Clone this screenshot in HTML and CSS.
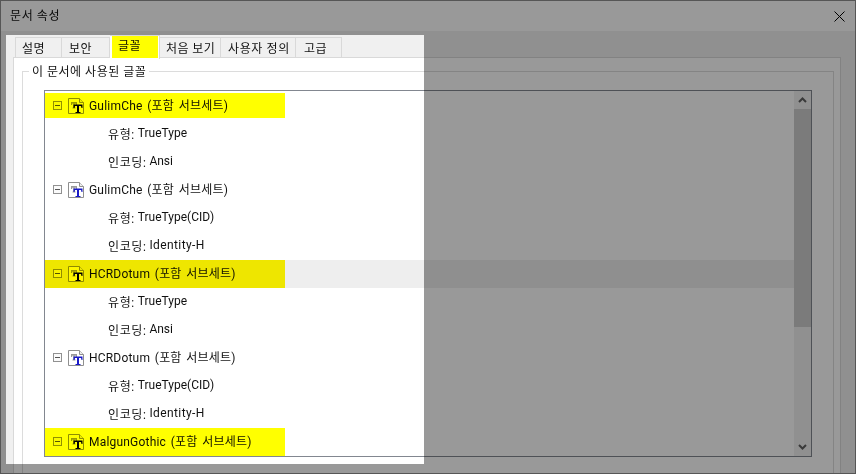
FILE: index.html
```html
<!DOCTYPE html>
<html lang="ko">
<head>
    <meta charset="UTF-8">
    <title>문서 속성</title>
    <link rel="stylesheet" href="styles.css">
</head>
<body>
    <svg class="icon-defs" width="0" height="0">
        <symbol id="font-icon" viewBox="0 0 16 16">
            <path class="paper" d="M0.5 0.5H11.5L15.5 4.5V15.5H0.5Z"/>
            <path class="fold" d="M11.5 0.5V4.5H15.5"/>
            <path class="t-back" d="M3 4H9V7H8L7.5 5.5H6.7V9.5H7.5V10.5H4.5V9.5H5.3V5.5H4.5L4 7H3Z"/>
            <path class="t-front" d="M5.5 6.5H14.5V10H13.5L13 8H11V14H12.5V15H7.5V14H9V8H7L6.5 10H5.5Z"/>
        </symbol>
    </svg>

    <div class="window">
        <div class="titlebar">
            <span class="title">문서 속성</span>
            <svg class="close" width="11" height="11" viewBox="0 0 11 11">
                <path d="M0.5 0.5L10.5 10.5M10.5 0.5L0.5 10.5"/>
            </svg>
        </div>

        <div class="dialog-body">
            <div class="tabs">
                <div class="tab tab-desc">설명</div>
                <div class="tab tab-security">보안</div>
                <div class="tab tab-fonts active">글꼴<span class="highlight"></span></div>
                <div class="tab tab-view">처음 보기</div>
                <div class="tab tab-custom">사용자 정의</div>
                <div class="tab tab-advanced">고급</div>
            </div>

            <div class="tab-page">
                <fieldset class="group">
                    <legend>이 문서에 사용된 글꼴</legend>
                    <div class="tree">
                        <div class="tree-rows">
                            <div class="row font-row truetype first">
                                <span class="toggle"></span>
                                <svg class="font-icon"><use href="#font-icon"/></svg>
                                <span class="font-name">GulimChe (포함 서브세트)</span>
                                <span class="highlight"></span>
                            </div>
                            <div class="row detail"><span class="key">유형:</span>&nbsp;TrueType</div>
                            <div class="row detail"><span class="key">인코딩:</span>&nbsp;Ansi</div>
                            <div class="row font-row cid">
                                <span class="toggle"></span>
                                <svg class="font-icon"><use href="#font-icon"/></svg>
                                <span class="font-name">GulimChe (포함 서브세트)</span>
                            </div>
                            <div class="row detail"><span class="key">유형:</span>&nbsp;TrueType(CID)</div>
                            <div class="row detail"><span class="key">인코딩:</span>&nbsp;<span class="wide">Identity-H</span></div>
                            <div class="row font-row truetype hover">
                                <span class="toggle"></span>
                                <svg class="font-icon"><use href="#font-icon"/></svg>
                                <span class="font-name">HCRDotum (포함 서브세트)</span>
                                <span class="highlight"></span>
                            </div>
                            <div class="row detail"><span class="key">유형:</span>&nbsp;TrueType</div>
                            <div class="row detail"><span class="key">인코딩:</span>&nbsp;Ansi</div>
                            <div class="row font-row cid">
                                <span class="toggle"></span>
                                <svg class="font-icon"><use href="#font-icon"/></svg>
                                <span class="font-name">HCRDotum (포함 서브세트)</span>
                            </div>
                            <div class="row detail"><span class="key">유형:</span>&nbsp;TrueType(CID)</div>
                            <div class="row detail"><span class="key">인코딩:</span>&nbsp;<span class="wide">Identity-H</span></div>
                            <div class="row font-row truetype">
                                <span class="toggle"></span>
                                <svg class="font-icon"><use href="#font-icon"/></svg>
                                <span class="font-name">MalgunGothic (포함 서브세트)</span>
                                <span class="highlight"></span>
                            </div>
                        </div>

                        <div class="scrollbar">
                            <svg class="arrow" width="9" height="6" viewBox="0 0 9 6">
                                <path d="M1 5L4.5 1.5L8 5"/>
                            </svg>
                            <div class="track">
                                <div class="thumb"></div>
                            </div>
                            <svg class="arrow" width="9" height="6" viewBox="0 0 9 6">
                                <path d="M1 1L4.5 4.5L8 1"/>
                            </svg>
                        </div>
                    </div>
                </fieldset>
            </div>
        </div>
    </div>

    <div class="spotlight"></div>
</body>
</html>
```

FILE: styles.css
```css
* {
    box-sizing: border-box;
}

html, body {
    margin: 0;
    padding: 0;
    width: 856px;
    height: 474px;
    overflow: hidden;
}

body {
    position: relative;
    font-family: Roboto, "Noto Sans CJK KR", sans-serif;
    font-size: 12px;
    color: #111;
    background-color: #f0f0f0;
}

.icon-defs {
    position: absolute;
}

.window {
    display: flex;
    flex-direction: column;
    height: 474px;
    border: 1px solid #8f8f8f;
    overflow: hidden;
}

.titlebar {
    display: flex;
    flex: none;
    justify-content: space-between;
    align-items: center;
    height: 30px;
    padding: 0 10px 0 9px;
    background-color: #fff;
}

.title {
    margin-bottom: 3px;
    letter-spacing: 0.6px;
}

.close path {
    fill: none;
    stroke: #000;
    stroke-width: 1;
}

.dialog-body {
    flex: 1;
    padding: 6px 14px 0 12px;
    background-color: #f0f0f0;
}

/* tabs */
.tabs {
    display: flex;
    height: 20px;
    padding-left: 2px;
}

.tab {
    position: relative;
    height: 21px;
    padding-left: 6px;
    line-height: 22px;
    letter-spacing: 0.4px;
    background-color: #f0f0f0;
    border: 1px solid #d9d9d9;
    border-left: 0;
    white-space: nowrap;
}

.tab:first-child {
    border-left: 1px solid #d9d9d9;
}

.tab-desc { width: 47px; }
.tab-security { width: 48px; padding-left: 7px; }
.tab-view { width: 61px; }
.tab-custom { width: 75px; padding-left: 7px; letter-spacing: 0.6px; }
.tab-advanced { width: 46px; padding-left: 8px; }

.tab.active {
    z-index: 1;
    width: 50px;
    height: 24px;
    margin-top: -2px;
    padding-left: 8px;
    line-height: 20px;
    background-color: #fff;
    border-bottom: 0;
}

.tab.active .highlight {
    top: 0;
    bottom: 1px;
    left: 2px;
    right: 1px;
    width: auto;
}

.highlight {
    position: absolute;
    background-color: #ff0;
    mix-blend-mode: multiply;
}

.tab-page {
    height: 420px;
    padding: 3px 6px 0 8px;
    background-color: #fff;
    border: 1px solid #d9d9d9;
}

.group {
    min-width: 0;
    height: 440px;
    margin: 0;
    padding: 9px 21px 0 21px;
    border: 1px solid #dcdcdc;
}

.group legend {
    margin-left: -15px;
    padding: 2px 3px 0;
    line-height: 18px;
    letter-spacing: 0.5px;
}

/* font tree */
.tree {
    display: flex;
    height: 367px;
    background-color: #fff;
    border: 1px solid #828790;
}

.tree-rows {
    flex: 1;
    padding-top: 1px;
}

.row {
    position: relative;
    display: flex;
    align-items: center;
    height: 28px;
    white-space: nowrap;
}

.detail {
    padding: 0 0 2px 63px;
}

.key {
    letter-spacing: 0.6px;
}

.wide {
    letter-spacing: 0.4px;
}

.font-row {
    padding-left: 8px;
}

.font-name {
    margin-bottom: 4px;
    letter-spacing: 0.2px;
    word-spacing: 1.5px;
}

.font-row .highlight {
    top: 0;
    bottom: 0;
    left: 0;
    width: 240px;
}

.font-row.first .highlight {
    top: 1px;
    bottom: 2px;
}

.font-row.hover {
    background-color: #eee;
}

.font-row.hover .highlight {
    background-color: #fff700;
}

.cid {
    --t-color: #1a1ac8;
}

.toggle {
    position: relative;
    width: 9px;
    height: 9px;
    margin: 0 6px 1px 0;
    background-color: #fafafa;
    border: 1px solid #919191;
}

.toggle::after {
    content: "";
    position: absolute;
    top: 3px;
    left: 1px;
    width: 5px;
    height: 1px;
    background-color: #555;
}

.font-icon {
    width: 16px;
    height: 16px;
    margin-right: 5px;
}

.paper {
    fill: #fff;
    stroke: #8f8f8f;
}

.fold {
    fill: #eee;
    stroke: #8f8f8f;
}

.t-back {
    fill: #9a9a9a;
}

.t-front {
    fill: var(--t-color, #000);
}

/* scrollbar */
.scrollbar {
    display: flex;
    flex: none;
    flex-direction: column;
    align-items: center;
    width: 17px;
    padding: 6px 0;
    background-color: #f0f0f0;
}

.arrow path {
    fill: none;
    stroke: #606060;
    stroke-width: 2;
}

.track {
    flex: 1;
    width: 100%;
    padding-top: 6px;
}

.thumb {
    height: 218px;
    background-color: #cdcdcd;
}

/* everything but the tabs and the left of the list is dimmed */
.spotlight {
    position: absolute;
    top: 35px;
    left: 6px;
    width: 418px;
    height: 429px;
    box-shadow: 0 0 0 900px rgba(0, 0, 0, 0.4);
    pointer-events: none;
}
```
